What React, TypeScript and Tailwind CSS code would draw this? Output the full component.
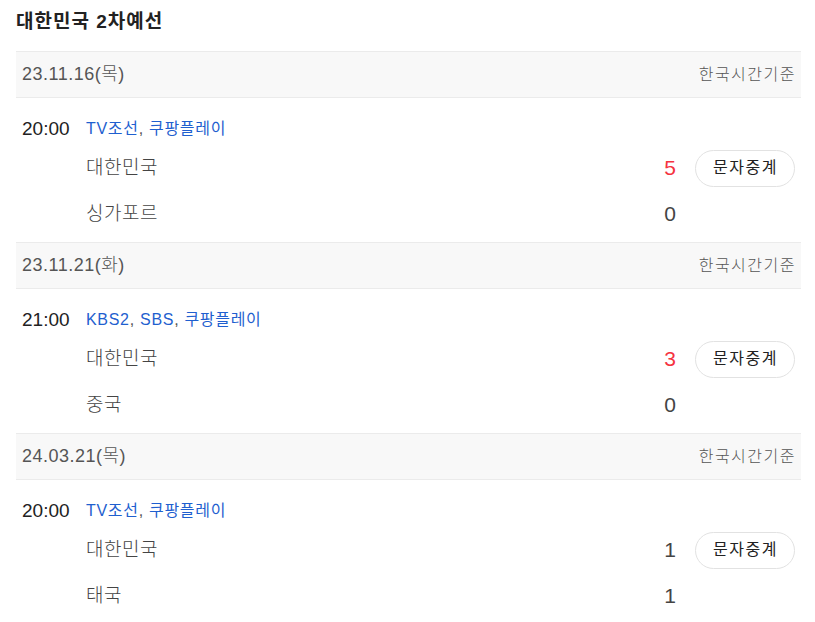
const font = { fontFamily: '"Liberation Sans", "Noto Sans CJK KR", sans-serif' };

type Match = {
  date: string;
  time: string;
  channels: string[];
  home: string;
  away: string;
  homeScore: number;
  awayScore: number;
  homeWin?: boolean;
};

const matches: Match[] = [
  { date: "23.11.16(목)", time: "20:00", channels: ["TV조선", "쿠팡플레이"], home: "대한민국", away: "싱가포르", homeScore: 5, awayScore: 0, homeWin: true },
  { date: "23.11.21(화)", time: "21:00", channels: ["KBS2", "SBS", "쿠팡플레이"], home: "대한민국", away: "중국", homeScore: 3, awayScore: 0, homeWin: true },
  { date: "24.03.21(목)", time: "20:00", channels: ["TV조선", "쿠팡플레이"], home: "대한민국", away: "태국", homeScore: 1, awayScore: 1 },
];

function DateBar({ date }: { date: string }) {
  return (
    <div className="flex h-[47px] items-center justify-between border-y border-[#ebebeb] bg-[#f8f8f8] pl-[6px] pr-[5px]">
      <span className="text-[18px] font-light tracking-[0.5px] text-[#555]">{date}</span>
      <span className="text-[16px] font-light tracking-[1.5px] text-[#555]">한국시간기준</span>
    </div>
  );
}

function MatchBlock({ m }: { m: Match }) {
  return (
    <div className="pb-[5px] pt-[20px]">
      <div className="flex h-[22px] items-center pl-[6px]">
        <span className="w-[64px] text-[19px] text-[#222]">{m.time}</span>
        <span className="text-[16px] tracking-[0.7px] text-[#1f5fcf]">
          {m.channels.map((c, i) => (
            <span key={c}>
              {c}
              {i < m.channels.length - 1 && <span className="text-[#555]">, </span>}
            </span>
          ))}
        </span>
      </div>
      <div className="mt-[5px] flex h-[46px] items-center pr-[6px]">
        <span className="pl-[70px] text-[19px] font-light tracking-[0.5px] text-[#444]">{m.home}</span>
        <span className={`ml-auto text-[21px] font-light ${m.homeWin ? "text-[#f5333f]" : "text-[#444]"}`}>{m.homeScore}</span>
        <button className="ml-[19px] h-[37px] w-[100px] rounded-full border border-[#e2e2e2] bg-white pl-[1px] text-[16px] tracking-[1.5px] text-[#222]">
          문자중계
        </button>
      </div>
      <div className="flex h-[46px] items-center pr-[6px]">
        <span className="pl-[70px] text-[19px] font-light tracking-[0.5px] text-[#444]">{m.away}</span>
        <span className="ml-auto text-[21px] font-light text-[#444]">{m.awayScore}</span>
        <span className="ml-[19px] w-[100px]" />
      </div>
    </div>
  );
}

export default function App() {
  return (
    <div className="h-[622px] overflow-hidden bg-white pl-[16px] pr-[14px]" style={font}>
      <h2 className="pb-[17px] pt-[10px] text-[19px] font-bold leading-[24px] tracking-[1px] text-[#222]">대한민국 2차예선</h2>
      {matches.map((m) => (
        <div key={m.date}>
          <DateBar date={m.date} />
          <MatchBlock m={m} />
        </div>
      ))}
    </div>
  );
}
